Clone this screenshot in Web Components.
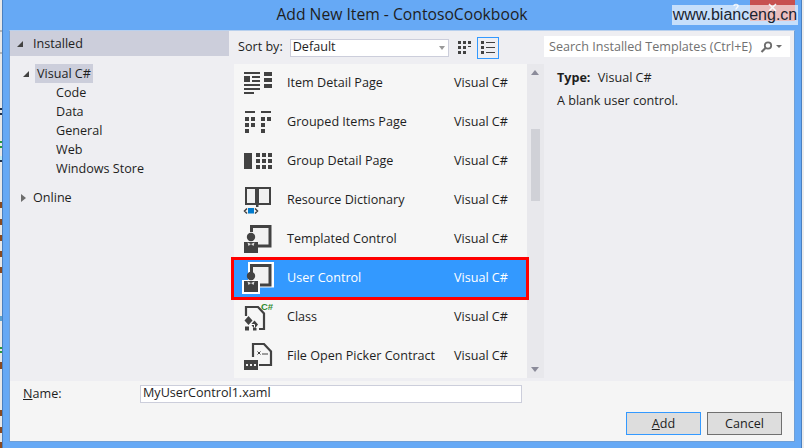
<!DOCTYPE html>
<html>
<head>
<meta charset="utf-8">
<title>Add New Item</title>
<style>
  html, body { margin: 0; padding: 0; width: 804px; height: 448px; overflow: hidden; background: #66a9f5; }
  body { font: 12.6px "Open Sans", "Noto Sans", sans-serif; color: #1e1e1e; }
</style>
</head>
<body>
<item-dialog heading="Add New Item - ContosoCookbook">
  <tree-panel slot="tree">
    <tree-head>Installed</tree-head>
    <tree-item level="1" arrow="open" selected>Visual C#</tree-item>
    <tree-item level="2">Code</tree-item>
    <tree-item level="2">Data</tree-item>
    <tree-item level="2">General</tree-item>
    <tree-item level="2">Web</tree-item>
    <tree-item level="2">Windows Store</tree-item>
    <tree-item level="0" arrow="closed" style="margin-top:10px">Online</tree-item>
  </tree-panel>
  <sort-bar slot="toolbar"></sort-bar>
  <template-list slot="list">
    <template-row icon="detail" lang="Visual C#">Item Detail Page</template-row>
    <template-row icon="grouped" lang="Visual C#">Grouped Items Page</template-row>
    <template-row icon="groupdetail" lang="Visual C#">Group Detail Page</template-row>
    <template-row icon="book" lang="Visual C#">Resource Dictionary</template-row>
    <template-row icon="control" lang="Visual C#">Templated Control</template-row>
    <template-row icon="control" lang="Visual C#" selected>User Control</template-row>
    <template-row icon="class" lang="Visual C#">Class</template-row>
    <template-row icon="picker" lang="Visual C#">File Open Picker Contract</template-row>
  </template-list>
  <info-panel slot="info"></info-panel>
  <name-field slot="footer" value="MyUserControl1.xaml"></name-field>
  <dialog-button slot="buttons" primary><u>A</u>dd</dialog-button>
  <dialog-button slot="buttons">Cancel</dialog-button>
</item-dialog>
<script>
function shadow(el, html) {
    el.attachShadow({ mode: "open" }).innerHTML = html;
}

const ICONS = {
    detail: `<path fill="#424242" d="M2 5h16v2H2zM2 9h6v6H2zM10 9h8v2h-8zM10 13h8v2h-8zM2 17h16v2H2zM2 21h16v2H2zM2 25h10v2H2zM22 5h8v4h-8zM22 11h8v4h-8zM22 17h8v4h-8z"/>`,
    grouped: `<path fill="#424242" d="M3 5h10v2H3zM19 5h10v2H19zM3 11h4v4H3zM9 11h4v4H9zM3 17h4v4H3zM9 17h4v4H9zM3 23h4v4H3zM19 11h4v4h-4zM25 11h4v4h-4zM19 17h4v4h-4zM19 23h4v4h-4z"/>`,
    groupdetail: `<path fill="#424242" d="M2 8h8v16H2zM14 8h4v4h-4zM20 8h4v4h-4zM26 8h4v4h-4zM14 14h4v4h-4zM20 14h4v4h-4zM26 14h4v4h-4zM14 20h4v4h-4zM20 20h4v4h-4zM26 20h4v4h-4z"/>`,
    book: `<path d="M4 4h10v16H4zM16 4h12v16H16z" fill="#f0f0f0" stroke="#424242" stroke-width="2"/>
           <path d="M14 3h2.500v20H14z" fill="#424242"/>
           <path d="M5 24.500l-2.500 2.500 2.500 2.500M13 24.500l2.500 2.500-2.500 2.500" fill="none" stroke="#424242" stroke-width="1.500"/>
           <rect x="6" y="24" width="6" height="5.500" fill="#007acc"/>`,
    class: `<path d="M4 15V6h12l6 6.500V28h-5" fill="#f6f6f6" stroke="#424242" stroke-width="2.200"/>
            <path d="M3 16h13v13H3z" fill="#f6f6f6"/>
            <path d="M6.500 15l4 4.500-4 4.500-4-4.500zM12.500 19.500l3.500 4-3.500 4.500-3.500-4.500zM3 25.500h4v4H3zM11 27h3.500v2.500H11z" fill="#424242"/>
            <path d="M8.500 23.500h4v3" fill="none" stroke="#fff"/>
            <text x="19" y="9" font-family="Liberation Sans, sans-serif" font-weight="700" font-size="9.500" fill="#2f8b2f">C#</text>`,
    picker: `<path d="M11 17V4h11l7 7.500V25H17" fill="#f6f6f6" stroke="#424242" stroke-width="2.200"/>
             <path d="M15.500 11.500l3 3M18.500 11.500l-3 3M20 14h6" fill="none" stroke="#424242"/>
             <rect x="1" y="19" width="16" height="12" fill="#f6f6f6"/>
             <rect x="2" y="20" width="14" height="10" fill="#424242"/>
             <path d="M4 24h2v2H4zM8 24h2v2H8zM12 24h2v2h-2z" fill="#f0f0f0"/>`
};

function controlIcon(sel) {
    return `${sel ? '<path d="M6 0h26v25.500H6z" fill="#fff"/>' : ""}
        <path d="M9.500 9V3.500H28V23H${sel ? 9.500 : 16}${sel ? "z" : ""}" fill="#f0f0f0" stroke="#424242" stroke-width="3"/>
        ${sel ? '<path d="M0 18h18v14H0z" fill="#fff"/>' : ""}
        <circle cx="9" cy="14" r="4.200" fill="#424242"/>
        <path d="M2 19h14v11H2z" fill="#424242"/>
        <path d="M5.500 19.500l3.500 1.500-2.500 2zM12.500 19.500L9 21l2.500 2z" fill="#dcdcdc"/>`;
}

class ItemDialog extends HTMLElement {
    constructor() {
        super();
        shadow(this, `<style>
            :host { display: block; width: 804px; height: 448px; box-sizing: border-box; padding: 0 9px; position: relative; }
            .title { height: 30px; display: flex; align-items: center; justify-content: center; font-size: 15.700px; padding-bottom: 2px; box-sizing: border-box; }
            .win { height: 412px; box-sizing: border-box; border: 1px solid #6f9fd6; border-top-color: #b8d0ee; background: #eeeef2; display: flex; flex-direction: column; }
            .main { flex: none; height: 350px; display: grid; grid-template-columns: 219px 1fr 250px; }
            .middle { display: flex; flex-direction: column; padding-left: 5px; }
            .foot { flex: 1; background: #f5f5f5; padding: 4px 12px 0 13px; }
            .btns { display: flex; justify-content: flex-end; gap: 6px; margin-top: 9px; }
            .close { position: absolute; left: 750px; top: 0; width: 45px; height: 21px; background: #c75050; }
            .caption { position: absolute; left: 732px; top: 3px; }
            .mark { position: absolute; left: 672px; top: 5px; width: 126px; height: 20px; background: rgba(255,255,255,.63); font: 16px/20px "Liberation Sans", sans-serif; color: #1a2430; text-align: center; white-space: nowrap; }
            .edge { position: absolute; top: 0; bottom: 0; }
            .left { left: 0; width: 3px; background:
                linear-gradient(90deg, transparent 0 2px, #4a80c0 2px),
                linear-gradient(180deg, #e8e8e8 0 30px, #b4b4b4 30px 32px, #e8e8e8 32px 52px, #b4b4b4 52px 54px, #e8e8e8 54px 108px, #20304a 108px 110px, #e8e8e8 110px 113px, #20304a 113px 115px, #e8e8e8 115px 141px, #2a9a40 141px 143px, #e8e8e8 143px 146px, #2a9a40 146px 148px, #e8e8e8 148px 156px, #bfeaf4 156px 160px, #20304a 160px 162px, #e8e8e8 162px 202px, #8a4a20 202px 208px, #e8e8e8 208px 219px, #8a4a20 219px 225px, #e8e8e8 225px 235px, #8a4a20 235px 241px, #e8e8e8 241px 251px, #8a4a20 251px 257px, #e8e8e8 257px 267px, #8a4a20 267px 273px, #e8e8e8 273px 316px, #5aa0d0 316px 321px, #e8e8e8 321px 347px, #2a9a40 347px 349px, #e8e8e8 349px 351px, #2a9a40 351px 353px, #e8e8e8 353px 362px, #8a4a20 362px 369px, #e8e8e8 369px 410px, #8a4a20 410px 416px, #e8e8e8 416px 427px, #8a4a20 427px 433px, #e8e8e8 433px 442px, #8a4a20 442px 448px); }
            .right { right: 0; width: 3px; background: linear-gradient(90deg, #4a80c0 0 1px, #ececec 1px); }
          </style>
          <div class="edge left"></div>
          <div class="edge right"></div>
          <div class="close"></div>
          <svg class="caption" width="48" height="10" viewBox="0 0 48 10" fill="none" stroke="#e8f0f8" stroke-width="1.500">
            <path d="M2 3c0-2 4-2 4 0 0 1.500-2 1.500-2 3.500M4 8v1.500"/>
            <path d="M37 1l7 7M44 1l-7 7"/>
          </svg>
          <div class="mark">www.bianceng.cn</div>
          <div class="title">${this.getAttribute("heading")}</div>
          <div class="win">
            <div class="main">
              <slot name="tree"></slot>
              <div class="middle"><slot name="toolbar"></slot><slot name="list"></slot></div>
              <slot name="info"></slot>
            </div>
            <div class="foot">
              <slot name="footer"></slot>
              <div class="btns"><slot name="buttons"></slot></div>
            </div>
          </div>`);
    }
}

class TreePanel extends HTMLElement {
    constructor() {
        super();
        shadow(this, `<style>:host { display: block; }</style><slot></slot>`);
    }
}

class TreeHead extends HTMLElement {
    constructor() {
        super();
        shadow(this, `<style>
            :host { display: flex; align-items: center; height: 25px; background: #ccceDB; padding-left: 7px; margin-bottom: 8px; }
            i { width: 0; height: 0; border-style: solid; border-width: 0 0 6px 6px; border-color: transparent transparent #424242 transparent; margin-right: 10px; }
          </style><i></i><slot></slot>`);
    }
}

class TreeItem extends HTMLElement {
    constructor() {
        super();
        const level = Number(this.getAttribute("level"));
        const arrow = this.getAttribute("arrow");
        const pad = [11, 13, 46][level];
        const mark = arrow === "open"
            ? `<i class="open"></i>`
            : arrow === "closed" ? `<i class="closed"></i>` : "";
        shadow(this, `<style>
            :host { display: flex; align-items: center; height: 19px; padding-left: ${pad}px; white-space: nowrap; }
            i { flex: none; width: 0; height: 0; border-style: solid; }
            .open { border-width: 0 0 6px 6px; border-color: transparent transparent #424242 transparent; margin-right: 6px; }
            .closed { border-width: 4px 0 4px 5px; border-color: transparent transparent transparent #6d6d6d; margin-right: 7px; }
            .t { padding: 0 1px 0 ${arrow === "open" ? 2 : 0}px; height: 19px; line-height: 19px; }
            :host([selected]) .t { background: #ccceDB; width: 55px; }
          </style>${mark}<span class="t"><slot></slot></span>`);
    }
}

class SortBar extends HTMLElement {
    constructor() {
        super();
        shadow(this, `<style>
            :host { display: flex; align-items: center; height: 33px; padding-left: 4px; }
            span { padding-bottom: 2px; }
            .combo { width: 159px; height: 18px; box-sizing: border-box; margin-left: 7px; border: 1px solid #ccceDB; background: #fff; padding-left: 2px; line-height: 13px; position: relative; }
            .combo i { position: absolute; right: 3px; top: 6px; border-style: solid; border-width: 4px 3px 0; border-color: #999 transparent transparent; }
            svg { display: block; margin-left: 9px; }
            .on { box-sizing: border-box; width: 22px; height: 22px; border: 1px solid #3399ff; margin-left: 5px; display: flex; align-items: center; justify-content: center; }
            .on svg { margin: 0; }
          </style>
          <span>Sort by:</span>
          <div class="combo">Default<i></i></div>
          <svg width="14" height="14" viewBox="0 0 14 14" fill="#424242"><path d="M0 0h3v3H0zM5 0h3v3H5zM10 0h3v3h-3zM0 5h3v3H0zM5 5h3v3H5zM10 5h3v1h-3zM0 10h3v3H0zM5 10h3v3H5z"/></svg>
          <div class="on"><svg width="14" height="14" viewBox="0 0 14 14" fill="#424242"><path d="M0 0h3v3H0zM5 1h9v1H5zM0 5h3v3H0zM5 6h9v1H5zM0 10h3v3H0zM5 11h9v1H5z"/></svg></div>`);
    }
}

class TemplateList extends HTMLElement {
    constructor() {
        super();
        shadow(this, `<style>
            :host { display: flex; height: 314px; background: #f6f6f6; }
            .rows { width: 293px; flex: none; }
            .bar { flex: 1; background: #e8e8ec; position: relative; }
            .thumb { position: absolute; left: 4px; top: 65px; width: 9px; height: 72px; background: #d0d1d7; }
            i { position: absolute; left: 4px; border-style: solid; border-color: transparent; border-width: 0 4.500px; }
            .up { top: 6px; border-bottom: 5px solid #8b8b9a; }
            .down { top: 303px; border-top: 5px solid #8b8b9a; border-bottom: 0; }
          </style>
          <div class="rows"><slot></slot></div>
          <div class="bar"><i class="up"></i><div class="thumb"></div><i class="down"></i></div>`);
    }
}

class TemplateRow extends HTMLElement {
    constructor() {
        super();
        const sel = this.hasAttribute("selected");
        const name = this.getAttribute("icon");
        const art = name === "control" ? controlIcon(sel) : ICONS[name];
        shadow(this, `<style>
            :host { display: flex; align-items: center; height: 39px; box-sizing: border-box; padding-bottom: 2px; position: relative; white-space: nowrap; }
            :host([selected]) { background: #3399ff; color: #fff; z-index: 1; }
            svg { flex: none; align-self: flex-start; width: 36px; height: 36px; margin: 3px 0 0 8px; overflow: visible; }
            .n { width: 167px; margin-left: 9px; flex: none; }
            .box { position: absolute; left: -3px; right: -2px; top: -2px; bottom: -2px; border: 3px solid #f00; }
          </style>
          <svg viewBox="0 0 36 36">${art}</svg>
          <span class="n"><slot></slot></span><span>${this.getAttribute("lang")}</span>
          ${sel ? '<div class="box"></div>' : ""}`);
    }
}

class InfoPanel extends HTMLElement {
    constructor() {
        super();
        shadow(this, `<style>
            :host { display: block; padding-top: 5px; }
            .search { width: 246px; height: 21px; background: #fff; color: #717171; display: flex; align-items: center; padding-left: 5px; box-sizing: border-box; white-space: nowrap; }
            .search svg { margin-left: 8px; flex: none; }
            p { margin: 0 0 0 13px; height: 23px; line-height: 23px; }
            .type { margin-top: 9px; }
            b { margin-right: 4px; }
          </style>
          <div class="search">Search Installed Templates (Ctrl+E)
            <svg width="24" height="12" viewBox="0 0 24 12"><circle cx="8" cy="4.500" r="3.200" fill="none" stroke="#6d6d6d" stroke-width="1.800"/><path d="M5.500 7L1.500 11" stroke="#6d6d6d" stroke-width="2.200"/><path d="M16 4h6l-3 3z" fill="#6d6d6d"/></svg>
          </div>
          <p class="type"><b>Type:</b> Visual C#</p>
          <p>A blank user control.</p>`);
    }
}

class NameField extends HTMLElement {
    constructor() {
        super();
        shadow(this, `<style>
            :host { display: flex; align-items: center; height: 18px; }
            span { width: 117px; padding-bottom: 1px; }
            .in { width: 382px; height: 18px; box-sizing: border-box; background: #fff; border: 1px solid #ccceDB; padding-left: 2px; line-height: 13px; }
          </style>
          <span><u>N</u>ame:</span><div class="in">${this.getAttribute("value")}</div>`);
    }
}

class DialogButton extends HTMLElement {
    constructor() {
        super();
        shadow(this, `<style>
            :host { display: flex; align-items: center; justify-content: center; width: 75px; height: 23px; box-sizing: border-box; background: #dddddd; border: 1px solid #707070; }
            :host([primary]) { border-color: #3399ff; }
          </style><slot></slot>`);
    }
}

customElements.define("item-dialog", ItemDialog);
customElements.define("tree-panel", TreePanel);
customElements.define("tree-head", TreeHead);
customElements.define("tree-item", TreeItem);
customElements.define("sort-bar", SortBar);
customElements.define("template-list", TemplateList);
customElements.define("template-row", TemplateRow);
customElements.define("info-panel", InfoPanel);
customElements.define("name-field", NameField);
customElements.define("dialog-button", DialogButton);
</script>
</body>
</html>
